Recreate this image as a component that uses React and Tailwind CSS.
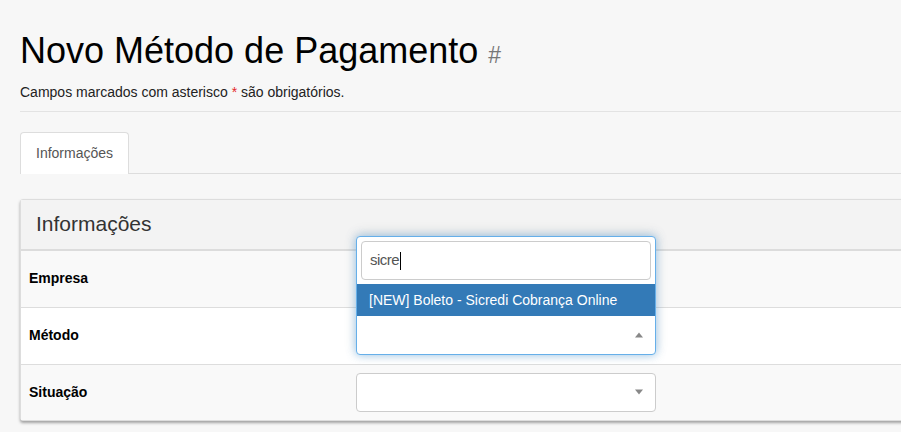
import React from "react";

function Caret({ up }) {
  return (
    <span
      className={
        up
          ? "absolute right-[12px] top-1/2 -translate-y-1/2 h-0 w-0 border-x-[4px] border-x-transparent border-b-[5px] border-b-[#888]"
          : "absolute right-[12px] top-1/2 -translate-y-1/2 h-0 w-0 border-x-[4px] border-x-transparent border-t-[5px] border-t-[#888]"
      }
    />
  );
}

function Row({ label, bg, last, children }) {
  return (
    <div
      className={`flex items-center ${bg} ${last ? "h-[55px]" : "h-[57px] border-b border-[#dddddd]"}`}
    >
      <div className="w-[335px] pl-[8px] text-[14px] font-bold text-black">{label}</div>
      {children}
    </div>
  );
}

export default function App() {
  return (
    <div className="h-screen overflow-hidden bg-[#f7f7f7] font-['Liberation_Sans',Arial,sans-serif] text-[#222]">
      <div className="w-[1200px] pl-5 pt-[31px]">
        {/* HEADER */}
        <h1 className="text-[36px] leading-[1.1] text-black">
          Novo Método de Pagamento <span className="text-[23px] text-[#777]">#</span>
        </h1>
        <p className="mt-[12px] text-[14px] leading-[18px] text-[#222]">
          Campos marcados com asterisco <span className="text-[#e5262b]">*</span> são obrigatórios.
        </p>
        <div className="mt-[10px] border-t border-[#e3e3e3]" />

        {/* TABS */}
        <div className="mt-[20px] flex border-b border-[#dddddd]">
          <div className="-mb-px flex h-[42px] items-center rounded-t-[4px] border border-b-0 border-[#dddddd] bg-white px-[15px] text-[14px] text-[#555]">
            Informações
          </div>
        </div>

        {/* PANEL */}
        <div className="mt-[25px] rounded-[3px] border border-[#dddddd] bg-[#f9f9f9] shadow-[0_2px_3px_rgba(0,0,0,0.35)]">
          <div className="flex h-[51px] items-center border-b-2 border-[#dcdcdc] bg-[#f3f3f3] pl-[15px] text-[21px] text-[#333]">
            Informações
          </div>

          <Row label="Empresa" bg="bg-[#f9f9f9]" />

          <Row label="Método" bg="bg-white">
            <div className="relative h-[39px] w-[300px]">
              <div className="absolute bottom-0 left-0 z-10 w-[300px] rounded-[4px] border border-[#66afe9] bg-white shadow-[0_0_8px_rgba(102,175,233,0.6),0_-2px_14px_rgba(0,0,0,0.12)]">
                <div className="p-[4px]">
                  <div className="flex h-[39px] items-center rounded-[4px] border border-[#cccccc] pl-[8px] text-[15px] tracking-[-0.5px] text-[#555]">
                    sicre
                    <span className="ml-px inline-block h-[18px] w-px bg-black" />
                  </div>
                </div>
                <div className="flex h-[32px] items-center bg-[#337ab7] pl-[12px] text-[14px] text-white">
                  [NEW] Boleto - Sicredi Cobrança Online
                </div>
                <div className="relative h-[38px]">
                  <Caret up />
                </div>
              </div>
            </div>
          </Row>

          <Row label="Situação" bg="bg-[#f9f9f9]" last>
            <div className="relative h-[39px] w-[300px] rounded-[4px] border border-[#cccccc] bg-white">
              <Caret />
            </div>
          </Row>
        </div>
      </div>
    </div>
  );
}
